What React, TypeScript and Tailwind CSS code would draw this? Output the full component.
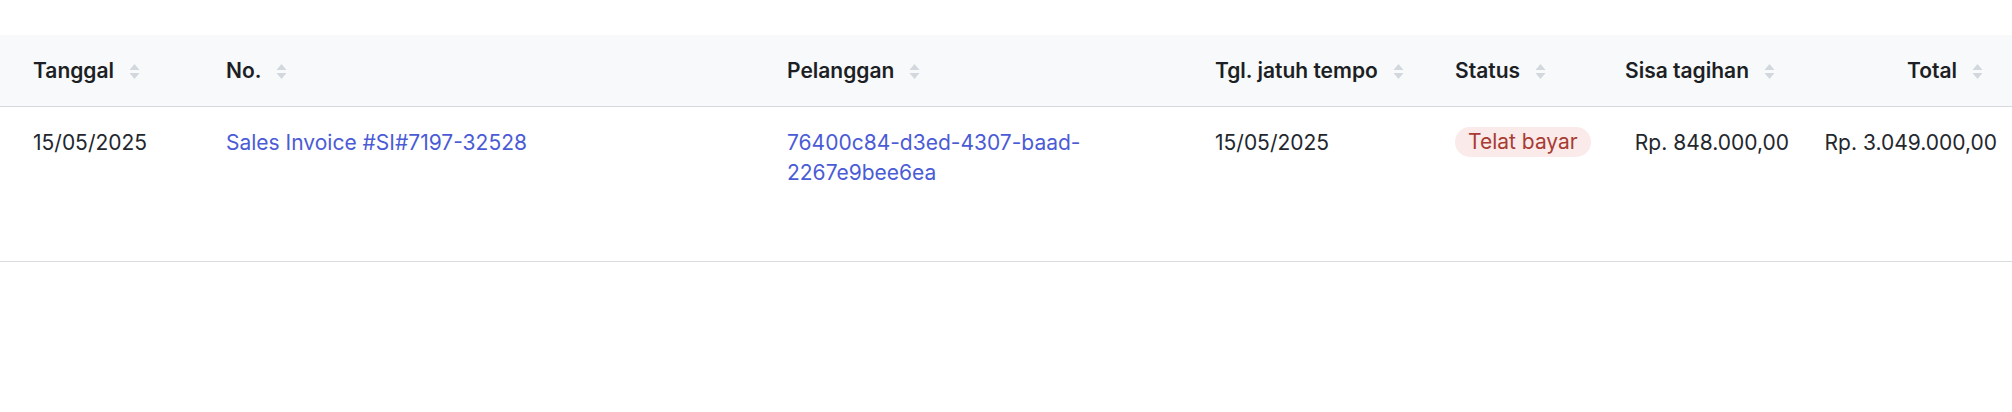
const SortIcon = () => (
  <svg width="11" height="17" viewBox="0 0 11 17" className="shrink-0">
    <path d="M5.5 1 L10.5 7 L0.5 7 Z" fill="#d3d7de" />
    <path d="M5.5 16 L10.5 10 L0.5 10 Z" fill="#d3d7de" />
  </svg>
);

type Col = {
  label: string;
  width: string;
  right?: boolean;
};

const columns: Col[] = [
  { label: "Tanggal", width: "w-[210px]" },
  { label: "No.", width: "w-[561px]" },
  { label: "Pelanggan", width: "w-[428px]" },
  { label: "Tgl. jatuh tempo", width: "w-[240px]" },
  { label: "Status", width: "w-[166px]" },
  { label: "Sisa tagihan", width: "w-[199px]", right: true },
  { label: "Total", width: "w-[208px]", right: true },
];

export default function App() {
  return (
    <div
      className="w-[2012px] h-[412px] bg-white pt-[35px] text-[21px] leading-[30px] text-[#23272e]"
      style={{ fontFamily: "Inter, 'Noto Sans', sans-serif" }}
    >
      <table className="w-full table-fixed border-collapse">
        <colgroup>
          {columns.map((c) => (
            <col key={c.label} className={c.width} />
          ))}
        </colgroup>
        <thead>
          <tr className="bg-[#f8f9fb] border-b border-[#d5d9e0]">
            {columns.map((c, i) => (
              <th
                key={c.label}
                className={`pt-[21px] pb-[20px] font-semibold text-[#1c1f24] ${
                  i === 0 ? "pl-[33px]" : "pl-[16px]"
                } ${c.right ? "pr-[29px]" : "pr-[16px]"}`}
              >
                <div
                  className={`flex items-center gap-[15px] ${
                    c.right ? "justify-end" : "justify-start"
                  }`}
                >
                  <span className="whitespace-nowrap">{c.label}</span>
                  <SortIcon />
                </div>
              </th>
            ))}
          </tr>
        </thead>
        <tbody>
          <tr className="h-[155px] border-b border-[#dadbe0] align-top">
            <td className="pl-[33px] pr-[16px] pt-[21px]">15/05/2025</td>
            <td className="px-[16px] pt-[21px] text-[#4b5bd6]">
              Sales Invoice #SI#7197-32528
            </td>
            <td className="px-[16px] pt-[21px] text-[#4b5bd6]">
              76400c84-d3ed-4307-baad-2267e9bee6ea
            </td>
            <td className="px-[16px] pt-[21px]">15/05/2025</td>
            <td className="px-[16px] pt-[20px]">
              <span className="inline-block rounded-full bg-[#fbeaea] px-[13px] leading-[30px] text-[#a83c33] whitespace-nowrap">
                Telat bayar
              </span>
            </td>
            <td className="pl-[16px] pr-[15px] pt-[21px] text-right whitespace-nowrap">
              Rp. 848.000,00
            </td>
            <td className="pl-[16px] pr-[15px] pt-[21px] text-right whitespace-nowrap">
              Rp. 3.049.000,00
            </td>
          </tr>
        </tbody>
      </table>
    </div>
  );
}
